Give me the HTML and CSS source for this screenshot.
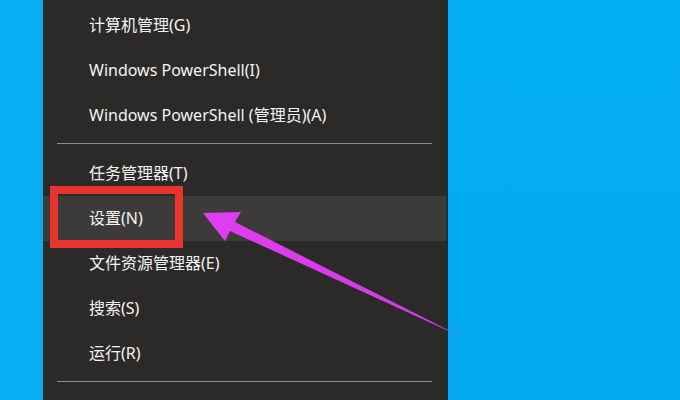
FILE: index.html
```html
<!doctype html>
<html lang="zh-CN">
    <head>
        <meta charset="UTF-8" />
        <meta name="viewport" content="width=device-width, initial-scale=1.0" />
        <title>Win+X 菜单</title>
        <link rel="stylesheet" href="styles.css">
    </head>
    <body>
        <div class="desktop">
            <div class="strip"></div>

            <ul class="menu">
                <li class="item">计算机管理(G)</li>
                <li class="item">Windows PowerShell(I)</li>
                <li class="item">Windows PowerShell (管理员)(A)</li>
                <li class="sep"></li>
                <li class="item">任务管理器(T)</li>
                <li class="item active">设置(N)</li>
                <li class="item">文件资源管理器(E)</li>
                <li class="item">搜索(S)</li>
                <li class="item">运行(R)</li>
                <li class="sep"></li>
            </ul>

            <div class="wall"></div>

            <!-- annotation: red box + arrow pointing at 设置 -->
            <div class="mark"></div>
            <svg class="arrow" width="680" height="400" viewBox="0 0 680 400">
                <defs>
                    <linearGradient id="fade" x1="203" y1="213" x2="470" y2="340" gradientUnits="userSpaceOnUse">
                        <stop offset="0" stop-color="#e03ef0" />
                        <stop offset="0.85" stop-color="#d23ae6" />
                        <stop offset="1" stop-color="#8a6cf0" stop-opacity="0.6" />
                    </linearGradient>
                </defs>
                <polygon fill="url(#fade)" points="203,213 241,212 235,222 466,339 230,231 225,241" />
            </svg>
        </div>
    </body>
</html>
```

FILE: styles.css
```css
html,
body {
    margin: 0;
    padding: 0;
}
body {
    width: 680px;
    height: 400px;
    overflow: hidden;
    font-family: "Noto Sans", "Noto Sans CJK SC", sans-serif;
}
.desktop {
    position: relative;
    display: flex;
    height: 400px;
    background: #02abf2;
}
.strip {
    width: 43px;
    background: #08aef4;
}
.menu {
    list-style: none;
    margin: 0;
    padding: 3px 0 0;
    width: 403px;
    background: #2b2a29;
    border-right: 2px solid #1f2b31;
}
.wall {
    flex: 1;
    background: linear-gradient(180deg, #03adf4 0%, #02a9f0 100%);
}
.item {
    height: 45px;
    line-height: 45px;
    padding-left: 46px;
    font-size: 16px;
    color: #f3f3f3;
    white-space: nowrap;
}
.item.active {
    background: #3c3b3a;
}
.sep {
    height: 1px;
    margin: 5px 14px 7px;
    background: #8c8c8c;
}
.mark {
    position: absolute;
    left: 50px;
    top: 186px;
    width: 117px;
    height: 46px;
    border: 8px solid #e8332f;
}
.arrow {
    position: absolute;
    left: 0;
    top: 0;
}
```
